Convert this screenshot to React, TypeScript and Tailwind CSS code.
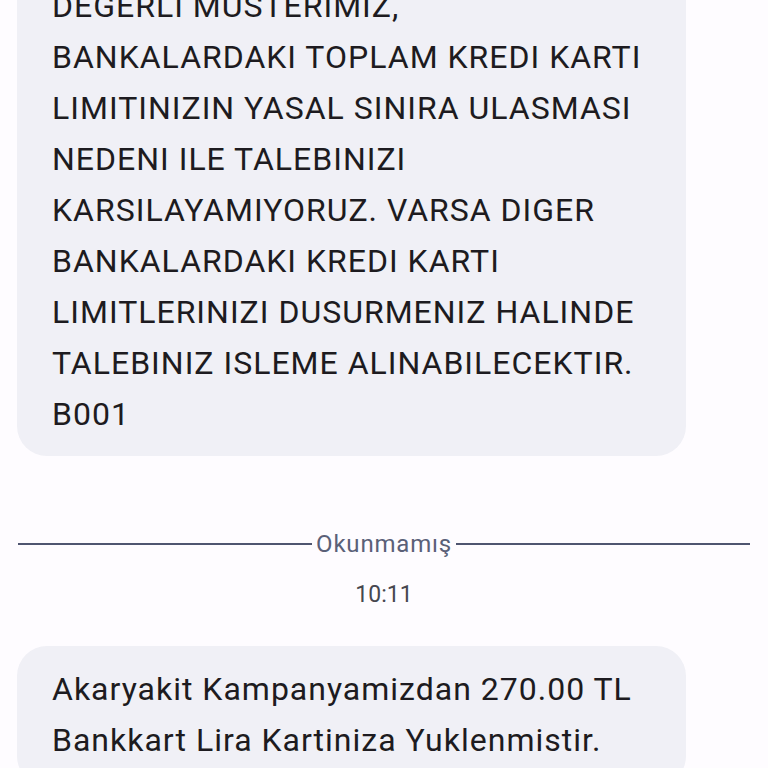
const firstLines = [
  'DEGERLI MUSTERIMIZ,',
  'BANKALARDAKI TOPLAM KREDI KARTI',
  'LIMITINIZIN YASAL SINIRA ULASMASI',
  'NEDENI ILE TALEBINIZI',
  'KARSILAYAMIYORUZ. VARSA DIGER',
  'BANKALARDAKI KREDI KARTI',
  'LIMITLERINIZI DUSURMENIZ HALINDE',
  'TALEBINIZ ISLEME ALINABILECEKTIR.',
  'B001',
];

const secondLines = ['Akaryakit Kampanyamizdan 270.00 TL', 'Bankkart Lira Kartiniza Yuklenmistir.'];

function Bubble({ lines, className }: { lines: string[]; className: string }) {
  return (
    <div className={`ml-[17px] w-[669px] bg-[#f0f0f6] rounded-[30px] px-[35px] ${className}`}>
      {lines.map((l, i) => (
        <div key={i} className="whitespace-nowrap text-[32px] leading-[51px] tracking-[1px] text-[#1d1b20]">
          {l}
        </div>
      ))}
    </div>
  );
}

export default function App() {
  return (
    <div className="h-[768px] w-[768px] overflow-hidden bg-[#fefcff] font-['Roboto','Noto_Sans',sans-serif]">
      <div className="-mt-[40px] flex flex-col">
        <Bubble lines={firstLines} className="pt-[21px] pb-[16px]" />

        <div className="mt-[73px] flex items-center h-[30px] px-[18px]">
          <div className="flex-1 h-[2px] bg-[#4f5570]" />
          <span className="px-[4px] text-[24px] leading-[30px] tracking-[0.8px] text-[#5a6078]">Okunmamış</span>
          <div className="flex-1 h-[2px] bg-[#4f5570]" />
        </div>

        <div className="mt-[21px] text-center text-[23px] leading-[30px] text-[#46474f]">10:11</div>

        <Bubble lines={secondLines} className="mt-[36px] pt-[18px] pb-[20px]" />
      </div>
    </div>
  );
}
